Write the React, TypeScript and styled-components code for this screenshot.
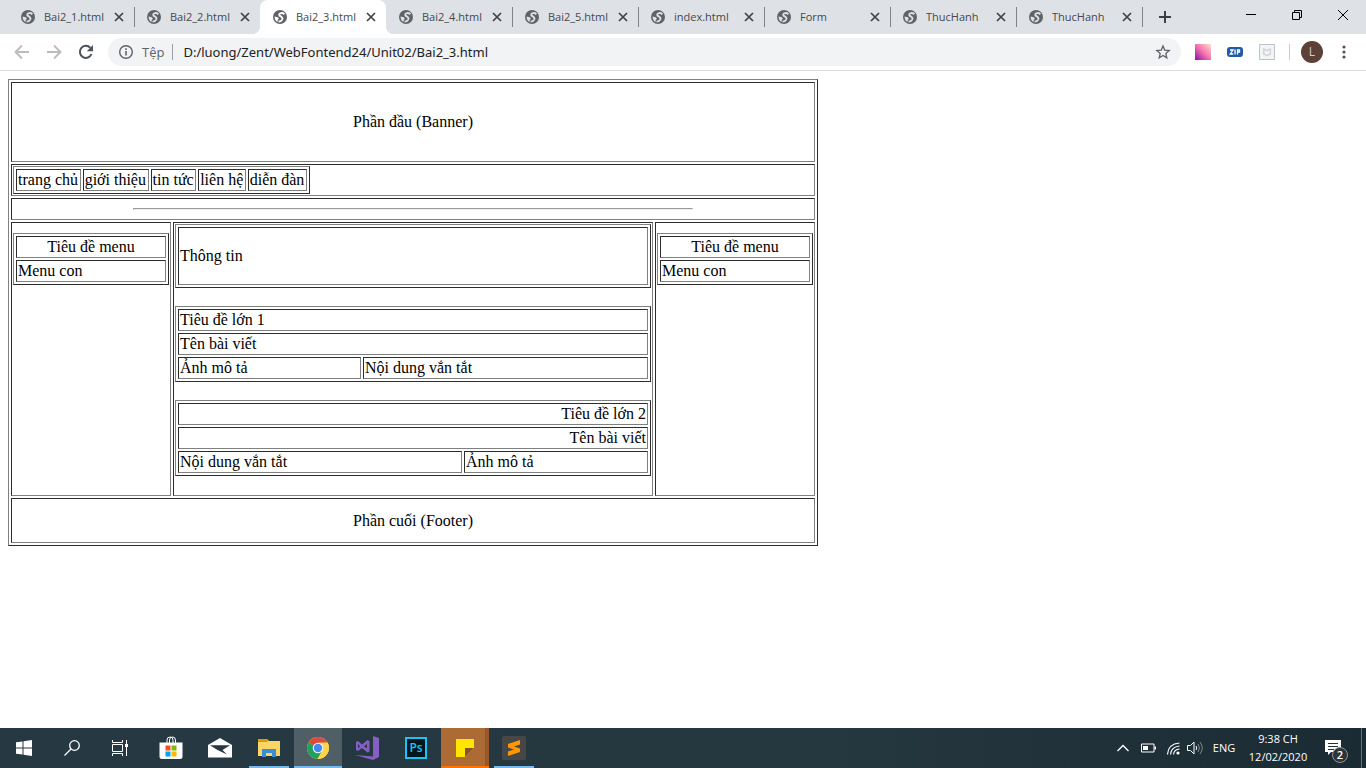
import React from "react";
import styled, { createGlobalStyle, css } from "styled-components";

const Global = createGlobalStyle`
  * { box-sizing: border-box; }
  body { margin: 0; background: #fff; color: #000; }
  button { border: 0; padding: 0; margin: 0; background: none; color: inherit; font: inherit; }
  svg { display: block; flex: none; }
`;

const ui = `"Open Sans", "Noto Sans", sans-serif`;

const Window = styled.div`
  display: flex;
  flex-direction: column;
  min-height: 100vh;
`;

/* ---------- tab strip ---------- */

const TabStrip = styled.header`
  display: flex;
  height: 34px;
  padding-left: 8px;
  background: #dee1e6;
  font-family: ${ui};
`;

const Tabs = styled.nav`
  display: flex;
  flex: 0 1 1134px;
  min-width: 0;
`;

const Tab = styled.div<{ $active?: boolean; $line?: boolean }>`
  position: relative;
  display: flex;
  align-items: center;
  flex: 1 1 0;
  min-width: 0;
  padding: 0 9px 0 12px;
  color: #45494d;
  ${(p) =>
    p.$line &&
    css`
      &::after {
        content: "";
        position: absolute;
        right: -1px;
        top: 7px;
        width: 1px;
        height: 20px;
        background: #808488;
      }
    `}
  ${(p) =>
    p.$active &&
    css`
      background: #fff;
      border-radius: 8px 8px 0 0;
      &::before,
      &::after {
        content: "";
        position: absolute;
        bottom: 0;
        width: 8px;
        height: 8px;
      }
      &::before {
        left: -8px;
        background: radial-gradient(circle at 0 0, transparent 8px, #fff 8px);
      }
      &::after {
        right: -8px;
        background: radial-gradient(circle at 100% 0, transparent 8px, #fff 8px);
      }
    `}
`;

const TabTitle = styled.button`
  flex: 1;
  min-width: 0;
  margin-left: 8px;
  overflow: hidden;
  white-space: nowrap;
  text-align: left;
  font-size: 11px;
  line-height: 16px;
`;

const CloseTab = styled.button`
  display: grid;
  place-items: center;
  width: 12px;
  height: 16px;
`;

const NewTab = styled.button`
  display: grid;
  place-items: center;
  width: 46px;
  height: 34px;
  color: #3c4043;
`;

const WindowControls = styled.div`
  display: flex;
  margin-left: auto;
`;

const WindowButton = styled.button`
  display: grid;
  place-items: center;
  width: 46px;
  height: 29px;
`;

/* ---------- toolbar ---------- */

const Toolbar = styled.div`
  display: flex;
  align-items: center;
  height: 37px;
  padding: 0 6px;
  border-bottom: 1px solid #dadce0;
  background: #fff;
  font-family: ${ui};
`;

const ToolButton = styled.button<{ $dim?: boolean }>`
  display: grid;
  place-items: center;
  width: 32px;
  height: 32px;
  color: ${(p) => (p.$dim ? "#babcbe" : "#4f5357")};
`;

const AddressBar = styled.form`
  display: flex;
  align-items: center;
  flex: 1;
  height: 28px;
  margin: 0 6px;
  padding: 0 10px;
  border-radius: 14px;
  background: #f1f3f4;
  color: #5f6368;
`;

const Scheme = styled.label`
  margin-left: 8px;
  padding-right: 8px;
  border-right: 1px solid #9aa0a6;
  font-size: 13px;
  line-height: 16px;
`;

const AddressInput = styled.input`
  flex: 1;
  min-width: 0;
  margin: 0 8px 0 10px;
  padding: 0;
  border: 0;
  outline: 0;
  background: none;
  color: #202124;
  font-family: "Noto Sans", sans-serif;
  font-size: 13px;
  line-height: 20px;
`;

const ToolDivider = styled.span`
  width: 1px;
  height: 16px;
  margin: 0 6px;
  background: #c8cacc;
`;

const Avatar = styled.span`
  display: grid;
  place-items: center;
  width: 22px;
  height: 22px;
  border-radius: 50%;
  background: #5d4037;
  color: #d7ccc8;
  font-size: 12px;
  line-height: 22px;
`;

/* ---------- web page ---------- */

const Page = styled.main`
  flex: 1;
  padding: 8px;
  font-family: "Liberation Serif", "Times New Roman", serif;
  font-size: 16px;
  line-height: 18px;
`;

const Frame = styled.table<{ $width?: string; $fixed?: boolean; $top?: number }>`
  width: ${(p) => p.$width ?? "100%"};
  margin-top: ${(p) => p.$top ?? 0}px;
  table-layout: ${(p) => (p.$fixed ? "fixed" : "auto")};
  border: 1px solid;
  border-color: #808080 #2c2c2c #2c2c2c #808080;
  border-spacing: 2px;
`;

const Cell = styled.td<{ $align?: string; $top?: boolean; $height?: number }>`
  height: ${(p) => (p.$height ? `${p.$height}px` : "auto")};
  padding: 1px;
  border: 1px solid;
  border-color: #2c2c2c #808080 #808080 #2c2c2c;
  text-align: ${(p) => p.$align ?? "left"};
  vertical-align: ${(p) => (p.$top ? "top" : "middle")};
  white-space: nowrap;
`;

const Col = styled.col<{ $width?: string }>`
  width: ${(p) => p.$width ?? "auto"};
`;

const Rule = styled.hr`
  width: 70%;
  margin: 8px auto;
  border: 1px solid;
  border-color: #9a9a9a #eee #eee #9a9a9a;
`;

const Sections = styled.div`
  display: grid;
  gap: 18px;
  padding-bottom: 18px;
`;

/* ---------- taskbar ---------- */

const Taskbar = styled.footer`
  display: flex;
  height: 40px;
  background: linear-gradient(90deg, #263841, #25373f 60%, #1b2b33);
  color: #fff;
  font-family: ${ui};
`;

const Apps = styled.div`
  display: flex;
  gap: 1px;
  margin-left: 3px;
`;

const SystemButtons = styled.div`
  display: flex;
`;

const TaskButton = styled.button<{ $bg?: string; $line?: string; $inset?: boolean }>`
  position: relative;
  display: grid;
  place-items: center;
  width: 48px;
  height: 40px;
  background: ${(p) => p.$bg ?? "none"};
  ${(p) =>
    p.$line &&
    css`
      &::after {
        content: "";
        position: absolute;
        bottom: 0;
        left: ${p.$inset ? "4px" : "0"};
        right: ${p.$inset ? "4px" : "0"};
        height: 2px;
        background: ${p.$line};
      }
    `}
`;

const Tray = styled.div`
  display: flex;
  align-items: center;
  margin-left: auto;
`;

const TrayButton = styled.button<{ $width: number }>`
  position: relative;
  display: grid;
  place-items: center;
  width: ${(p) => p.$width}px;
  height: 40px;
  font-size: 11px;
  line-height: 18px;
`;

const ShowDesktop = styled.button`
  width: 5px;
  height: 40px;
  margin-left: 8px;
  border-left: 1px solid #64727a;
`;

const Badge = styled.span`
  position: absolute;
  right: 5px;
  bottom: 5px;
  width: 16px;
  height: 16px;
  border: 1px solid #8d9499;
  border-radius: 50%;
  background: #2f3437;
  font-size: 11px;
  font-weight: 600;
  line-height: 14px;
  text-align: center;
`;

/* ---------- icons ---------- */

const Globe = ({ land }: { land: string }) => (
  <svg width="16" height="16" viewBox="0 0 16 16">
    <circle cx="8" cy="8" r="7" fill="#5f6368" />
    <path
      d="M12.400 5.200C10.400 3.400 7.300 3.900 7.200 5.700 7.100 7.500 10.700 7.300 10.500 9.500 10.400 11.300 8.400 12.500 6.600 12.500"
      fill="none"
      stroke={land}
      strokeWidth="1.900"
    />
    <path d="M2.600 7.400 5.800 8.200 6.900 9.500 5.700 11 5.600 12.900C3.700 12 2.500 10 2.600 7.400Z" fill={land} />
  </svg>
);

const Cross = () => (
  <svg width="10" height="10" viewBox="0 0 10 10">
    <path d="M1 1 9 9M9 1 1 9" stroke="#3f4347" strokeWidth="1.7" />
  </svg>
);

const Arrow = ({ flip }: { flip?: boolean }) => (
  <svg width="16" height="16" viewBox="0 0 16 16" fill="none" stroke="currentColor" strokeWidth="1.9">
    <path d={flip ? "M1 8H14M8 1.5 14.5 8 8 14.5" : "M15 8H2M8 1.5 1.5 8 8 14.5"} />
  </svg>
);

const StoreIcon = () => (
  <svg width="24" height="24" viewBox="0 0 24 24">
    <path d="M8 7V4a3 3 0 0 1 6 0v3M10.500 7V4a3 3 0 0 1 6 0v3" fill="none" stroke="#fff" strokeWidth="1" />
    <path d="M.5 6.500h23v14q0 2.500-2.500 2.500H3q-2.500 0-2.500-2.500z" fill="#fff" />
    <path d="M6.500 9.500h5v5h-5z" fill="#f25022" />
    <path d="M12.500 9.500h5v5h-5z" fill="#7fba00" />
    <path d="M6.500 15.500h5v5h-5z" fill="#00a4ef" />
    <path d="M12.500 15.500h5v5h-5z" fill="#ffb900" />
  </svg>
);

const ChromeIcon = () => (
  <svg width="24" height="24" viewBox="0 0 24 24">
    <circle cx="12" cy="12" r="11" fill="#fdd44b" />
    <path d="M12 12 2.500 6.500A11 11 0 0 1 21.500 6.500L12 7z" fill="#db4a3e" />
    <path d="M2.500 6.500A11 11 0 0 0 11.500 23L16.500 14.500 12 12z" fill="#1fa15d" />
    <path d="M12 6.800H21.700A11 11 0 0 1 11.500 23L16.500 14.500z" fill="#fdd44b" />
    <circle cx="12" cy="12" r="5.300" fill="#f4f7fb" />
    <circle cx="12" cy="12" r="4.200" fill="#4688f1" />
  </svg>
);

const PhotoshopMark = styled.span`
  display: grid;
  place-items: center;
  width: 22px;
  height: 22px;
  border: 2px solid #1cc5f1;
  background: #04161f;
  color: #1cc5f1;
  font-size: 12px;
  font-weight: 600;
  line-height: 16px;
`;

const tabNames = [
  "Bai2_1.html",
  "Bai2_2.html",
  "Bai2_3.html",
  "Bai2_4.html",
  "Bai2_5.html",
  "index.html",
  "Form",
  "ThucHanh",
  "ThucHanh",
];
const activeTab = 2;

const SideMenu = () => (
  <Frame $top={9}>
    <tbody>
      <tr>
        <Cell $align="center">Tiêu đề menu</Cell>
      </tr>
      <tr>
        <Cell>Menu con</Cell>
      </tr>
    </tbody>
  </Frame>
);

export default function App() {
  return (
    <Window>
      <Global />
      <TabStrip>
        <Tabs aria-label="Tabs">
          {tabNames.map((name, i) => (
            <Tab key={i} $active={i === activeTab} $line={i !== activeTab && i !== activeTab - 1}>
              <Globe land={i === activeTab ? "#fff" : "#dee1e6"} />
              <TabTitle>{name}</TabTitle>
              <CloseTab aria-label="Close tab">
                <Cross />
              </CloseTab>
            </Tab>
          ))}
        </Tabs>
        <NewTab aria-label="New tab">
          <svg width="12" height="12" viewBox="0 0 12 12">
            <path d="M6 0V12M0 6H12" stroke="currentColor" strokeWidth="2" />
          </svg>
        </NewTab>
        <WindowControls>
          <WindowButton aria-label="Minimize">
            <svg width="10" height="10" viewBox="0 0 10 10">
              <path d="M0 4.500H10" stroke="#000" />
            </svg>
          </WindowButton>
          <WindowButton aria-label="Restore">
            <svg width="10" height="10" viewBox="0 0 10 10" fill="none" stroke="#000">
              <path d="M.5 2.500h7v7h-7zM2.500 2.500v-2h7v7h-2" />
            </svg>
          </WindowButton>
          <WindowButton aria-label="Close">
            <svg width="10" height="10" viewBox="0 0 10 10">
              <path d="M0 0 10 10M10 0 0 10" stroke="#000" />
            </svg>
          </WindowButton>
        </WindowControls>
      </TabStrip>

      <Toolbar>
        <ToolButton $dim aria-label="Back">
          <Arrow />
        </ToolButton>
        <ToolButton $dim aria-label="Forward">
          <Arrow flip />
        </ToolButton>
        <ToolButton aria-label="Reload">
          <svg width="16" height="16" viewBox="0 0 16 16">
            <path d="M13.500 10A6 6 0 1 1 12.300 3.800" fill="none" stroke="currentColor" strokeWidth="2" />
            <path d="M15 1v6.200H8.800z" fill="currentColor" />
          </svg>
        </ToolButton>
        <AddressBar onSubmit={(e) => e.preventDefault()}>
          <svg width="16" height="16" viewBox="0 0 16 16">
            <circle cx="8" cy="8" r="6.300" fill="none" stroke="currentColor" strokeWidth="1.400" />
            <path d="M7.200 7h1.600v4.500H7.200zM7.200 4.300h1.600v1.600H7.200z" fill="currentColor" />
          </svg>
          <Scheme htmlFor="address">Tệp</Scheme>
          <AddressInput id="address" defaultValue="D:/luong/Zent/WebFontend24/Unit02/Bai2_3.html" />
          <svg width="16" height="16" viewBox="0 0 16 16">
            <path
              d="M8 2 9.700 6.100 14.200 6.500 10.800 9.400 11.800 13.800 8 11.500 4.200 13.800 5.200 9.400 1.800 6.500 6.300 6.100Z"
              fill="none"
              stroke="currentColor"
              strokeWidth="1.300"
            />
          </svg>
        </AddressBar>
        <ToolButton aria-label="Color extension">
          <svg width="16" height="16" viewBox="0 0 16 16">
            <defs>
              <linearGradient id="pinks" x1="0" y1="1" x2="1" y2="0">
                <stop offset="0" stopColor="#8b10a8" />
                <stop offset=".5" stopColor="#f573ad" />
                <stop offset="1" stopColor="#ffe0cc" />
              </linearGradient>
            </defs>
            <path d="M0 0h16v16H0z" fill="url(#pinks)" />
          </svg>
        </ToolButton>
        <ToolButton aria-label="ZIP extension">
          <svg width="16" height="10" viewBox="0 0 16 10">
            <rect width="16" height="10" rx="3" fill="#1f5ca8" />
            <path d="M3 3h3L3.200 7h3M8 2.500v5M10.500 7.500V3h2v2h-2" fill="none" stroke="#fff" strokeWidth="1.300" />
          </svg>
        </ToolButton>
        <ToolButton aria-label="Shield extension">
          <svg width="16" height="16" viewBox="0 0 16 16" fill="none">
            <path d="M.5.5h15v15H.5z" fill="#f3f4f5" stroke="#bcc3c8" />
            <path d="M4.700 5v5L8 11.500 11.300 10V5L8 6.500z" stroke="#d3d6d9" strokeWidth="1.600" />
          </svg>
        </ToolButton>
        <ToolDivider />
        <ToolButton aria-label="Profile">
          <Avatar>L</Avatar>
        </ToolButton>
        <ToolButton aria-label="Menu">
          <svg width="4" height="14" viewBox="0 0 4 14" fill="currentColor">
            <circle cx="2" cy="2" r="1.600" />
            <circle cx="2" cy="7" r="1.600" />
            <circle cx="2" cy="12" r="1.600" />
          </svg>
        </ToolButton>
      </Toolbar>

      <Page>
        <Frame $width="60%" $fixed>
          <colgroup>
            <Col $width="20%" />
            <Col />
            <Col $width="20%" />
          </colgroup>
          <tbody>
            <tr>
              <Cell colSpan={3} $align="center" $height={80}>
                Phần đầu (Banner)
              </Cell>
            </tr>
            <tr>
              <Cell colSpan={3}>
                <Frame $width="297px">
                  <tbody>
                    <tr>
                      {["trang chủ", "giới thiệu", "tin tức", "liên hệ", "diễn đàn"].map((t) => (
                        <Cell key={t}>{t}</Cell>
                      ))}
                    </tr>
                  </tbody>
                </Frame>
              </Cell>
            </tr>
            <tr>
              <Cell colSpan={3}>
                <Rule />
              </Cell>
            </tr>
            <tr>
              <Cell $top>
                <SideMenu />
              </Cell>
              <Cell $top>
                <Sections>
                  <Frame>
                    <tbody>
                      <tr>
                        <Cell $height={58}>Thông tin</Cell>
                      </tr>
                    </tbody>
                  </Frame>
                  <Frame $fixed>
                    <colgroup>
                      <Col $width="183px" />
                      <Col />
                    </colgroup>
                    <tbody>
                      <tr>
                        <Cell colSpan={2}>Tiêu đề lớn 1</Cell>
                      </tr>
                      <tr>
                        <Cell colSpan={2}>Tên bài viết</Cell>
                      </tr>
                      <tr>
                        <Cell>Ảnh mô tả</Cell>
                        <Cell>Nội dung vắn tắt</Cell>
                      </tr>
                    </tbody>
                  </Frame>
                  <Frame $fixed>
                    <colgroup>
                      <Col />
                      <Col $width="184px" />
                    </colgroup>
                    <tbody>
                      <tr>
                        <Cell colSpan={2} $align="right">
                          Tiêu đề lớn 2
                        </Cell>
                      </tr>
                      <tr>
                        <Cell colSpan={2} $align="right">
                          Tên bài viết
                        </Cell>
                      </tr>
                      <tr>
                        <Cell>Nội dung vắn tắt</Cell>
                        <Cell>Ảnh mô tả</Cell>
                      </tr>
                    </tbody>
                  </Frame>
                </Sections>
              </Cell>
              <Cell $top>
                <SideMenu />
              </Cell>
            </tr>
            <tr>
              <Cell colSpan={3} $align="center" $height={45}>
                Phần cuối (Footer)
              </Cell>
            </tr>
          </tbody>
        </Frame>
      </Page>

      <Taskbar>
        <SystemButtons>
          <TaskButton aria-label="Start">
            <svg width="16" height="16" viewBox="0 0 16 16" fill="#fff">
              <path d="M0 2.300 6.500 1.400V7.500H0zM7.500 1.200 16 0V7.500H7.500zM0 8.500H6.500V14.600L0 13.700zM7.500 8.500H16V16L7.500 14.800z" />
            </svg>
          </TaskButton>
          <TaskButton aria-label="Search">
            <svg width="16" height="16" viewBox="0 0 16 16" fill="none" stroke="#fff" strokeWidth="1.300">
              <circle cx="10.500" cy="5.500" r="4.800" />
              <path d="M7 9 .5 15.500" />
            </svg>
          </TaskButton>
          <TaskButton aria-label="Task view">
            <svg width="16" height="16" viewBox="0 0 16 16" fill="none" stroke="#fff">
              <path d="M.5 0v2.500h10V0M.5 16v-2.500h10V16M.5 4.500h10v7H.5zM14.500 0v16" />
              <path d="M13 4h3v3h-3z" fill="#fff" stroke="none" />
            </svg>
          </TaskButton>
        </SystemButtons>
        <Apps>
          <TaskButton aria-label="Store">
            <StoreIcon />
          </TaskButton>
          <TaskButton aria-label="Mail">
            <svg width="24" height="20" viewBox="0 0 24 20">
              <path d="M0 7 12 0 24 7V19.500H0z" fill="#fff" />
              <path d="M2 7.200H22L14.500 12 19 16.500 9.500 12z" fill="#26373f" />
            </svg>
          </TaskButton>
          <TaskButton $line="#76b9ed" $inset aria-label="File Explorer">
            <svg width="22" height="20" viewBox="0 0 22 20">
              <path d="M0 1h9l2 2h11v15H0z" fill="#fbd565" />
              <path d="M0 1h9l1 2-1 1H0z" fill="#dd9b0a" />
              <path d="M4 11h14v8h-4v-4H8v4H4z" fill="#3c8dd2" />
            </svg>
          </TaskButton>
          <TaskButton $bg="#505e66" $line="#76b9ed" aria-label="Chrome">
            <ChromeIcon />
          </TaskButton>
          <TaskButton aria-label="Visual Studio">
            <svg width="24" height="24" viewBox="0 0 24 24" fill="#865fc5">
              <path d="M18 0 24 2V21L18 24 0 19 18 20.500z" />
              <path
                d="M1 6 3 5 7 8.500 12.500 4 14.500 5V15.500L12.500 16.500 7 12 3 15 1 14zM3 8v4.500L5 10.200zM12 8 9 10.200 12 12.500z"
                fillRule="evenodd"
              />
            </svg>
          </TaskButton>
          <TaskButton aria-label="Photoshop">
            <PhotoshopMark>Ps</PhotoshopMark>
          </TaskButton>
          <TaskButton
            $bg="linear-gradient(90deg, #ac6a35 44px, #8a5229 44px, #97592c 45px)"
            $line="#ff7200"
            aria-label="Sticky Notes"
          >
            <svg width="18" height="18" viewBox="0 0 18 18">
              <path d="M0 0h18v9l-9 9H0z" fill="#ffe500" />
              <path d="M9 9h9l-9 9z" fill="#8a5229" />
            </svg>
          </TaskButton>
          <TaskButton $line="#76b9ed" $inset aria-label="Sublime Text">
            <svg width="24" height="24" viewBox="0 0 24 24">
              <rect width="24" height="24" rx="2" fill="#474747" />
              <path d="M6 8 18 4V8.500L12 10.500 18 12.500V16L6 20V15.500L12 13.500 6 11.500z" fill="#ff9800" />
            </svg>
          </TaskButton>
        </Apps>
        <Tray>
          <TrayButton $width={24} aria-label="Show hidden icons">
            <svg width="12" height="8" viewBox="0 0 12 8">
              <path d="M.5 7 6 1.500 11.500 7" fill="none" stroke="#fff" strokeWidth="1.300" />
            </svg>
          </TrayButton>
          <TrayButton $width={26} aria-label="Battery">
            <svg width="15" height="10" viewBox="0 0 15 10">
              <path d="M.5 1h12.500v8H.5z" fill="none" stroke="#fff" />
              <path d="M2 3h5v4H2zM13.500 3.500h1.500v3h-1.500z" fill="#fff" />
            </svg>
          </TrayButton>
          <TrayButton $width={24} aria-label="Wi-Fi">
            <svg width="13" height="13" viewBox="0 0 13 13" fill="none" stroke="#fff">
              <path d="M.5 12.500Q1 2 12.500 1M3.500 12.500Q4 5 12.500 4M6.500 12.500Q7 7.500 12.500 7" strokeWidth="1.100" />
              <circle cx="11" cy="11" r="1.600" fill="#fff" stroke="none" />
            </svg>
          </TrayButton>
          <TrayButton $width={20} aria-label="Volume">
            <svg width="16" height="14" viewBox="0 0 16 14" fill="none" stroke="#fff">
              <path d="M.5 4.500h3L7 1v12L3.500 9.500h-3zM9 5q1.500 2 0 4" />
              <path d="M11 3q3 4 0 8M13 1q4.500 6 0 12" stroke="#7c878d" />
            </svg>
          </TrayButton>
          <TrayButton $width={38}>ENG</TrayButton>
          <TrayButton $width={70}>
            <span>
              9:38 CH
              <br />
              12/02/2020
            </span>
          </TrayButton>
          <TrayButton $width={40} aria-label="Notifications">
            <svg width="16" height="16" viewBox="0 0 16 16">
              <path d="M0 0h16v12H6l-3 3V12H0z" fill="#fff" />
              <path d="M3 3.500h10M3 6.500h10M3 9.500h6" stroke="#22333b" />
            </svg>
            <Badge>2</Badge>
          </TrayButton>
          <ShowDesktop aria-label="Show desktop" />
        </Tray>
      </Taskbar>
    </Window>
  );
}
